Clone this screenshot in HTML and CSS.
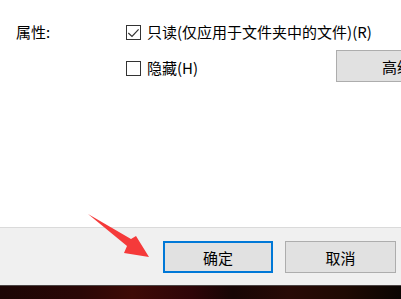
FILE: index.html
```html
<!DOCTYPE html>
<html lang="zh-CN">
<head>
<meta charset="utf-8">
<link rel="stylesheet" href="styles.css">
</head>
<body>
<div class="screen">
  <main class="content">
    <div class="row row-first">
      <span class="label">属性:</span>
      <label class="check">
        <span class="box">
          <svg width="15" height="15" viewBox="0 0 15 15"><polyline points="2.3,8 6,11.5 12.6,4.3" fill="none" stroke="#333" stroke-width="1.2"/></svg>
        </span>
        <span class="check-text">只读(仅应用于文件夹中的文件)(R)</span>
      </label>
    </div>
    <div class="row row-second">
      <label class="check check-hidden">
        <span class="box"></span>
        <span class="check-text">隐藏(H)</span>
      </label>
      <button class="btn btn-advanced">高级</button>
    </div>
  </main>
  <footer class="footer">
    <button class="btn btn-ok">确定</button>
    <button class="btn btn-cancel">取消</button>
  </footer>
  <div class="taskbar"></div>
  <svg class="arrow" width="401" height="299" viewBox="0 0 401 299">
    <polygon points="88,214 131,239 136,236 149,257 124,253 127,246" fill="#f53a3a"/>
  </svg>
</div>
</body>
</html>
```

FILE: styles.css
```css
html, body {
  margin: 0;
  padding: 0;
  background: #fff;
}

.screen {
  position: relative;
  width: 401px;
  height: 299px;
  overflow: hidden;
  font-family: "Noto Sans CJK SC", "Liberation Sans", sans-serif;
  font-size: 15px;
  color: #000;
  display: flex;
  flex-direction: column;
}

.content {
  height: 227px;
  background: #fff;
  box-sizing: border-box;
  padding-top: 22px;
}

.row {
  display: flex;
  align-items: center;
}

.row-first {
  height: 20px;
}

.label {
  width: 110px;
  padding-left: 16px;
  box-sizing: content-box;
  line-height: 20px;
  flex: none;
}

.check {
  display: flex;
  align-items: center;
  gap: 6px;
  white-space: nowrap;
}

.box {
  width: 13px;
  height: 13px;
  border: 1px solid #333;
  background: #fff;
  position: relative;
  flex: none;
}

.box svg {
  position: absolute;
  left: -1px;
  top: -1px;
}

.check-text {
  line-height: 20px;
}

.row-second {
  margin-top: 8px;
  padding-left: 126px;
  align-items: flex-start;
  height: 32px;
}

.check-hidden {
  margin-top: 8px;
}

.btn {
  font-family: "Noto Sans CJK SC", "Liberation Sans", sans-serif;
  font-size: 15px;
  color: #000;
  background: #e1e1e1;
  border: 1px solid #adadad;
  padding: 0;
  margin: 0;
  height: 32px;
  box-sizing: border-box;
}

.btn-advanced {
  margin-left: auto;
  margin-right: -57px;
  width: 122px;
  flex: none;
}

.footer {
  height: 58px;
  box-sizing: border-box;
  border-top: 1px solid #dadada;
  background: #f0f0f0;
  display: flex;
  justify-content: flex-end;
  align-items: flex-start;
  padding: 13px 5px 0 0;
  gap: 12px;
}

.btn-ok {
  width: 110px;
  border: 2px solid #0078d7;
}

.btn-cancel {
  width: 111px;
}

.taskbar {
  flex: 1;
  border-top: 1px solid #4b4444;
  background: linear-gradient(90deg, #1c0605 0%, #2a0706 20%, #3e0a06 33%, #2e0508 48%, #170605 58%, #280a06 72%, #1f0a03 86%, #0b0503 100%);
}

.arrow {
  position: absolute;
  left: 0;
  top: 0;
  pointer-events: none;
}
```
